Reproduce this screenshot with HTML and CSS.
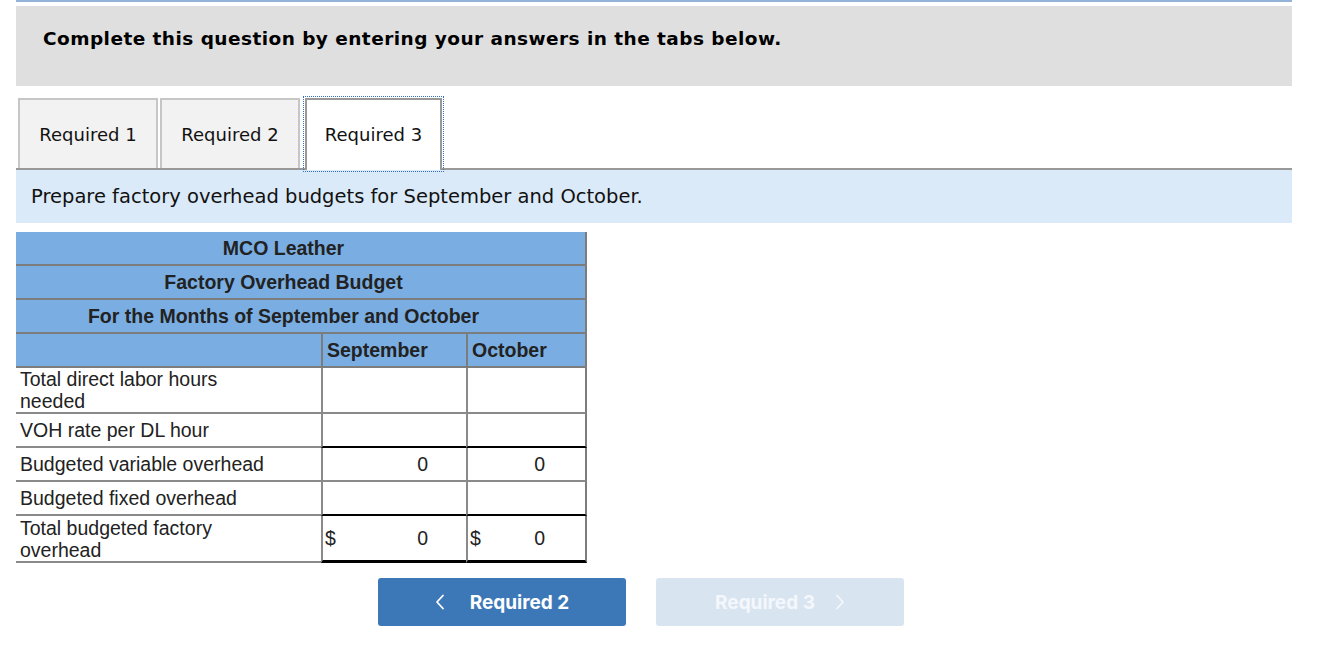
FILE: index.html
```html
<!DOCTYPE html>
<html>
<head>
<meta charset="utf-8">
<link rel="stylesheet" href="styles.css">
</head>
<body>
<div class="page">
  <div class="topline"></div>
  <div class="instructions">Complete this question by entering your answers in the tabs below.</div>
  <div class="tabs">
    <div class="tab">Required 1</div>
    <div class="tab tab2">Required 2</div>
    <div class="tab active">Required 3</div>
  </div>
  <div class="prompt">Prepare factory overhead budgets for September and October.</div>
  <table class="budget">
    <colgroup>
      <col class="c1"><col class="c2"><col class="c3">
    </colgroup>
    <tr><th colspan="3" class="title">MCO Leather</th></tr>
    <tr><th colspan="3" class="title">Factory Overhead Budget</th></tr>
    <tr><th colspan="3" class="title">For the Months of September and October</th></tr>
    <tr class="colhead"><th class="blank"></th><th class="v">September</th><th class="v last">October</th></tr>
    <tr class="tall"><td class="lbl">Total direct labor hours<br>needed</td><td class="v"></td><td class="v last"></td></tr>
    <tr><td class="lbl">VOH rate per DL hour</td><td class="v blackb"></td><td class="v last blackb"></td></tr>
    <tr><td class="lbl">Budgeted variable overhead</td><td class="v num">0</td><td class="v last num">0</td></tr>
    <tr><td class="lbl">Budgeted fixed overhead</td><td class="v blackb"></td><td class="v last blackb"></td></tr>
    <tr class="tall"><td class="lbl">Total budgeted factory<br>overhead</td><td class="v num total"><span class="cur">$</span>0</td><td class="v last num total"><span class="cur">$</span>0</td></tr>
  </table>
  <div class="nav">
    <div class="btn prev"><svg class="chev" width="10" height="16" viewBox="0 0 10 16"><path d="M8 1.5 L2 8 L8 14.5" fill="none" stroke="#fff" stroke-width="1.8" stroke-linecap="round" stroke-linejoin="round"/></svg><span>Required 2</span></div>
    <div class="btn next"><span>Required 3</span><svg class="chev" width="10" height="16" viewBox="0 0 10 16"><path d="M2 1.5 L8 8 L2 14.5" fill="none" stroke="#f4f7fb" stroke-width="1.8" stroke-linecap="round" stroke-linejoin="round"/></svg></div>
  </div>
</div>
</body>
</html>
```

FILE: styles.css
```css
html, body { margin: 0; padding: 0; background: #fff; }
.page { width: 1276px; margin-left: 16px; font-family: "DejaVu Sans", Verdana, sans-serif; color: #000; }
.topline { height: 2px; background: #93b4d8; margin-bottom: 4px; }
.instructions {
  height: 80px; box-sizing: border-box; background: #dfdfdf;
  padding: 22px 0 0 27px; font-weight: bold; font-size: 18.5px; letter-spacing: 0.45px; line-height: 22px; color: #000;
}
.tabs { display: flex; margin-top: 12px; border-bottom: 2px solid #999; height: 70px; }
.tab {
  width: 140px; height: 70px; box-sizing: border-box; margin-left: 2px;
  border: 2px solid #c6c6c6; border-bottom: none; background: #f2f2f2;
  display: flex; align-items: center; justify-content: center;
  font-size: 18px; color: #111; padding-top: 0;
}
.tab2 { margin-left: 2px; }
.tab.active {
  margin-left: 5px; width: 137px; height: 72px; padding-bottom: 2px; background: #fff;
  border-color: #999; outline: 1px dotted #2f6ec0; outline-offset: 1px; position: relative; z-index: 1;
}
.prompt {
  height: 53px; box-sizing: border-box; background: #dbeaf8; padding: 15px 0 0 15px;
  font-size: 19.5px; line-height: 24px; color: #111;
}
.budget {
  margin-top: 9px; border-spacing: 0; width: 571px; table-layout: fixed;
  font-family: "Liberation Sans", Arial, sans-serif; font-size: 19.5px; color: #222;
}
.c1 { width: 305px; } .c2 { width: 145px; } .c3 { width: 121px; }
.budget th { background: #7aaee2; font-weight: bold; padding: 0; height: 32px; border-bottom: 2px solid #7c7c7c; color: #222; }
.budget th.title { text-align: center; border-right: 2px solid #7c7c7c; line-height: 30px; padding-right: 34px; }
.budget tr.colhead th { text-align: left; }
.budget th.v { padding-left: 4px; border-left: 2px solid #7c7c7c; }
.budget .last { border-right: 2px solid #7c7c7c; }
.budget td { height: 32px; padding: 0; border-bottom: 2px solid #8a8a8a; background: #fff; vertical-align: middle; }
.budget tr.tall td { height: 44px; }
.budget td.lbl { padding-left: 4px; line-height: 22px; color: #222; }
.budget td.v { border-left: 2px solid #8a8a8a; }
.budget td.blackb { border-bottom: 2px solid #000; }
.budget td.num { text-align: right; padding-right: 38px; }
.budget td.last.num { padding-right: 40px; }
.budget td.total { position: relative; border-bottom: 3px solid #000; }
.cur { position: absolute; left: 2px; top: 50%; transform: translateY(-50%); }
.nav { display: flex; margin-top: 15px; margin-left: 362px; gap: 30px; }
.btn {
  width: 248px; height: 48px; border-radius: 3px; display: flex; align-items: center; justify-content: center;
  font-family: Inter, "Liberation Sans", sans-serif; font-weight: bold; font-size: 19px; color: #fff; gap: 25px;
}
.btn.prev { background: #3c78b8; }
.btn.next { background: #d9e4f1; color: #f4f7fb; gap: 20px; }
.chev { display: block; }
```
